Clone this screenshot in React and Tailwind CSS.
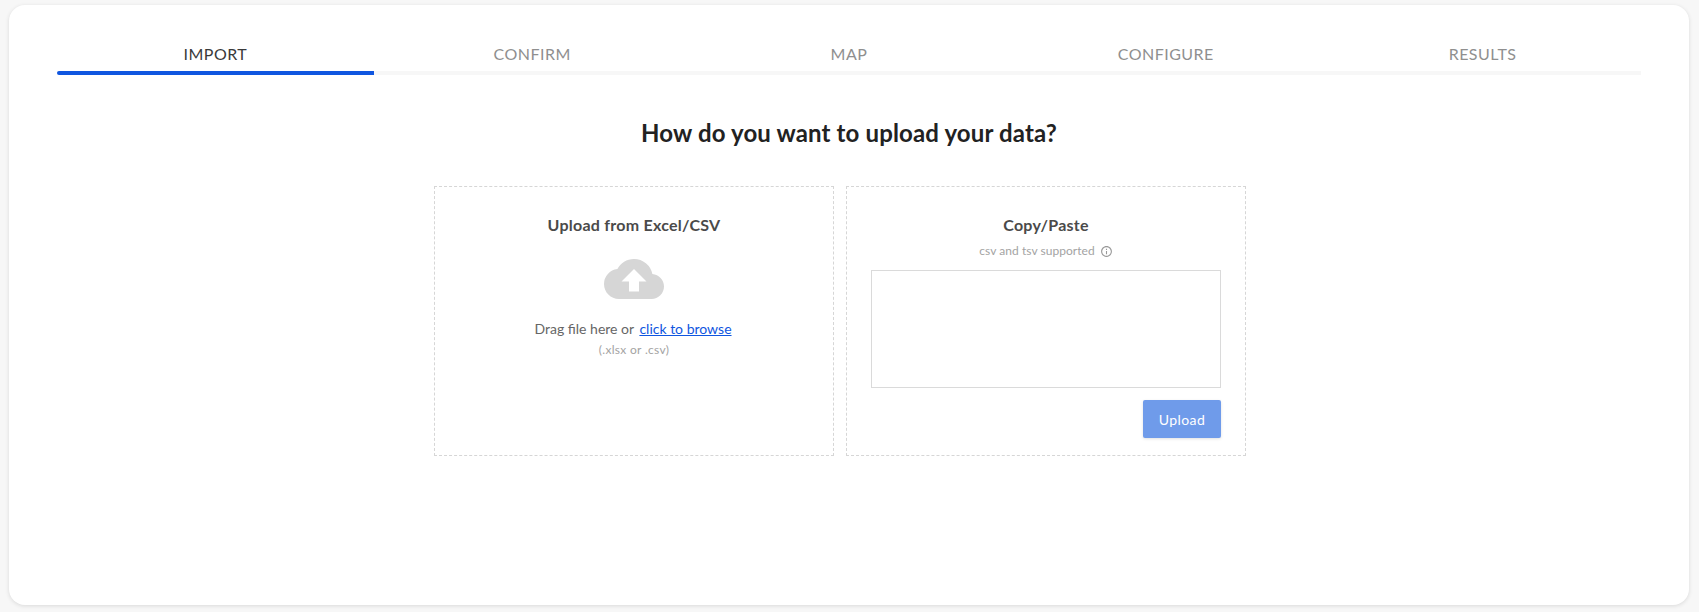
import React from "react";
import { MdCloudUpload, MdInfoOutline } from "react-icons/md";

const steps = ["IMPORT", "CONFIRM", "MAP", "CONFIGURE", "RESULTS"];
const font = "font-['Lato','Liberation_Sans',sans-serif]";

export default function App() {
  return (
    <div className={`min-h-[612px] bg-[#f7f7f7] pt-[5px] pb-[7px] pl-[9px] pr-[10px] ${font}`}>
      <div className="h-[600px] rounded-[16px] bg-white shadow-[0_1px_4px_rgba(0,0,0,0.12)] pt-[38px] px-[48px]">
        <div className="grid grid-cols-5">
          {steps.map((s, i) => (
            <div key={s} className="flex flex-col">
              <div className={`h-[28px] text-center text-[16px] leading-[22px] tracking-[0.03em] ${i === 0 ? "text-[#3a3a3a]" : "text-[#8f8f8f]"}`}>
                {s}
              </div>
              <div className={`h-[4px] ${i === 0 ? "bg-[#0f56e0] rounded-l-full" : "bg-[#f7f7f7]"}`} />
            </div>
          ))}
        </div>
        <h1 className="mt-[42px] text-center text-[24px] leading-[32px] font-bold tracking-[0.14px] text-[#222222]">
          How do you want to upload your data?
        </h1>
        <div className="mt-[37px] flex justify-center gap-[12px] pr-[18px]">
          <section className="h-[270px] w-[400px] border border-dashed border-[#d6d6d6] flex flex-col items-center pt-[27px]">
            <h2 className="text-[16px] leading-[22px] font-bold tracking-[0.25px] text-[#4a4a4a]">Upload from Excel/CSV</h2>
            <MdCloudUpload size={60} className="mt-[13px] text-[#d6d6d6]" />
            <p className="mt-[10px] pr-[2px] text-[14px] leading-[20px] text-[#666666]">
              Drag file here or{" "}
              <a href="#" className="ml-[2px] text-[#0f56e0] underline">click to browse</a>
            </p>
            <p className="mt-[1px] text-[12px] leading-[20px] tracking-[0.3px] text-[#a3a3a3]">(.xlsx or .csv)</p>
          </section>
          <section className="h-[270px] w-[400px] border border-dashed border-[#d6d6d6] flex flex-col items-center pt-[27px] px-[24px]">
            <h2 className="text-[16px] leading-[22px] font-bold tracking-[0.25px] text-[#4a4a4a]">Copy/Paste</h2>
            <div className="mt-[6px] flex items-center gap-[5px] text-[12px] leading-[18px] tracking-[0.05px] text-[#a3a3a3]">
              <span>csv and tsv supported</span>
              <MdInfoOutline size={13} className="text-[#999999]" />
            </div>
            <textarea className="mt-[10px] block h-[118px] w-[350px] resize-none border border-[#dadada] bg-white outline-none" />
            <div className="mt-[12px] flex w-[350px] justify-end">
              <button className={`h-[38px] w-[78px] rounded-[2px] bg-[#6f9bea] text-[14px] text-white tracking-[0.4px] shadow-[0_1px_3px_rgba(0,0,0,0.12)] ${font}`}>
                Upload
              </button>
            </div>
          </section>
        </div>
      </div>
    </div>
  );
}
